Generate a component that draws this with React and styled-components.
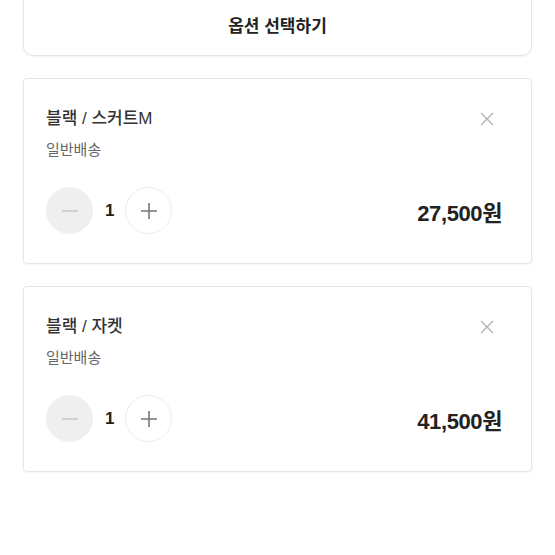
import styled, { createGlobalStyle } from "styled-components";

const GlobalStyle = createGlobalStyle`
    body{
        margin: 0;
        background: #ffffff;
        font-family: "Liberation Sans", "Noto Sans CJK KR", sans-serif;
        color: #222;
    }
`

const items = [
    { name: "블랙 / 스커트M", shipping: "일반배송", qty: 1, price: "27,500원" },
    { name: "블랙 / 자켓", shipping: "일반배송", qty: 1, price: "41,500원" },
];

const App = () =>{
    return(
        <Page>
            <GlobalStyle />
            <SelectButton>옵션 선택하기</SelectButton>
            {items.map((item)=>{
                return(
                    <Card key={item.name}>
                        <CardHead>
                            <Title>{item.name}</Title>
                            <CloseButton aria-label="삭제">
                                <svg width="16" height="16" viewBox="0 0 16 16">
                                    <path d="M2 2 L14 14 M14 2 L2 14" stroke="#b4b4b4" strokeWidth="1.4" fill="none" />
                                </svg>
                            </CloseButton>
                        </CardHead>
                        <Shipping>{item.shipping}</Shipping>
                        <CardFoot>
                            <Counter>
                                <RoundButton disabled>
                                    <svg width="20" height="20" viewBox="0 0 20 20">
                                        <path d="M2 10 H18" stroke="#c8c8c8" strokeWidth="1.6" />
                                    </svg>
                                </RoundButton>
                                <Qty>{item.qty}</Qty>
                                <RoundButton>
                                    <svg width="20" height="20" viewBox="0 0 20 20">
                                        <path d="M2 10 H18 M10 2 V18" stroke="#777" strokeWidth="1.6" />
                                    </svg>
                                </RoundButton>
                            </Counter>
                            <Price>{item.price}</Price>
                        </CardFoot>
                    </Card>
                )
            })}
        </Page>
    )
}

const Page = styled.div`
    padding: 0 23px 40px;
    display: flex;
    flex-direction: column;
    gap: 22px;
`

const SelectButton = styled.button`
    margin-top: -8px;
    height: 64px;
    width: 100%;
    background: #fff;
    border: 1px solid #e4e4e4;
    border-radius: 10px;
    box-shadow: 0 1px 2px rgba(0,0,0,0.06);
    font-family: "Liberation Sans", "Noto Sans CJK KR", sans-serif;
    font-size: 17px;
    font-weight: 700;
    color: #222;
    padding-top: 2px;
`

const Card = styled.div`
    height: 186px;
    box-sizing: border-box;
    border: 1px solid #e6e6e6;
    border-radius: 4px;
    box-shadow: 0 1px 2px rgba(0,0,0,0.05);
    padding: 29px 29px 0 22px;
    display: flex;
    flex-direction: column;
`

const CardHead = styled.div`
    display: flex;
    justify-content: space-between;
    align-items: center;
`

const Title = styled.div`
    font-size: 17px;
    line-height: 22px;
    color: #333;
    font-weight: 500;
`

const CloseButton = styled.button`
    border: none;
    background: none;
    padding: 0;
    margin-right: 7px;
    width: 16px;
    height: 16px;
    display: flex;
`

const Shipping = styled.div`
    margin-top: 10px;
    font-size: 15px;
    line-height: 20px;
    color: #666;
`

const CardFoot = styled.div`
    margin-top: 27px;
    display: flex;
    justify-content: space-between;
    align-items: center;
`

const Counter = styled.div`
    display: flex;
    align-items: center;
    gap: 12px;
`

const RoundButton = styled.button`
    width: 47px;
    height: 47px;
    border-radius: 50%;
    padding: 0;
    display: flex;
    align-items: center;
    justify-content: center;
    background: ${props => props.disabled ? "#efefef" : "#fff"};
    border: 1px solid ${props => props.disabled ? "#efefef" : "#ececec"};
`

const Qty = styled.span`
    font-size: 17px;
    font-weight: 700;
    color: #222;
    width: 8px;
    text-align: center;
`

const Price = styled.div`
    font-size: 22px;
    font-weight: 700;
    color: #222;
    letter-spacing: -0.4px;
`

export default App;
